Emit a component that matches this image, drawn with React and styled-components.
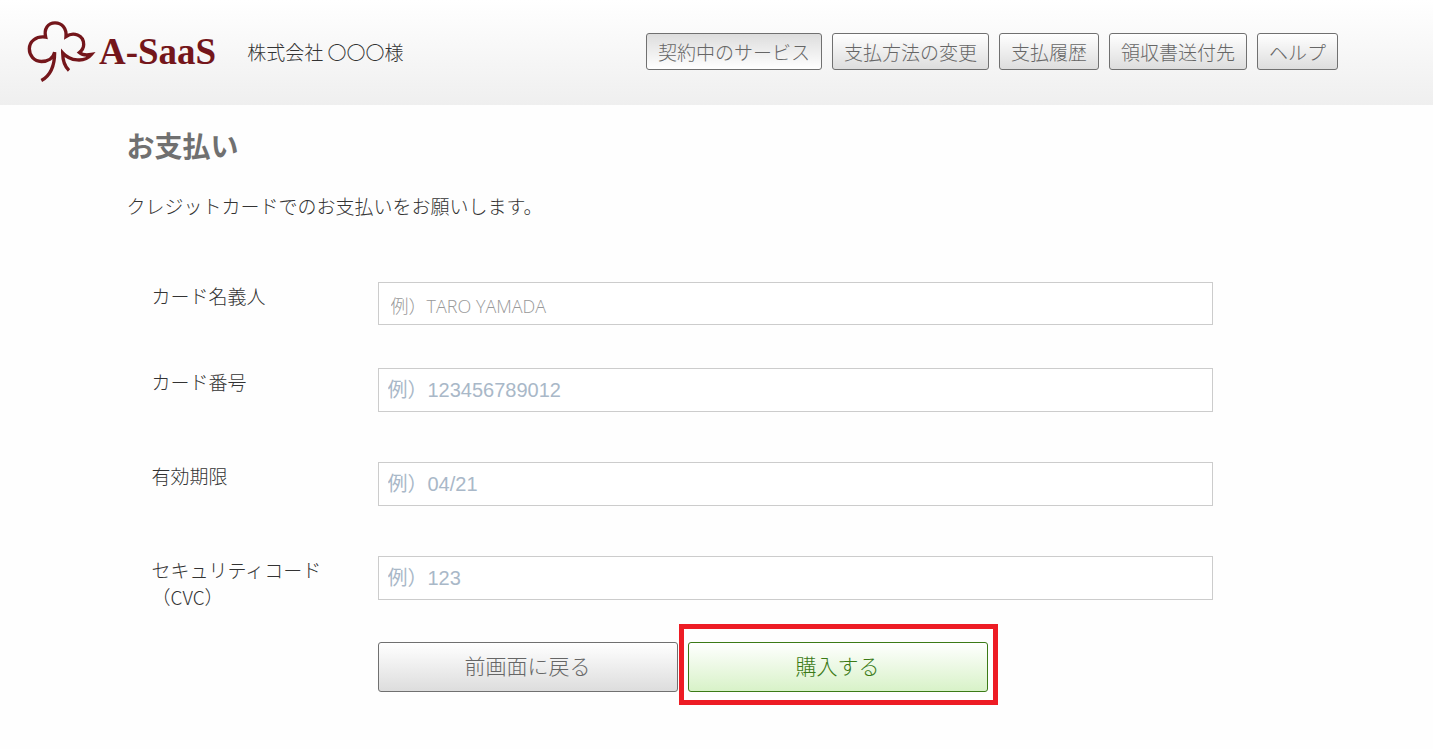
import { useState } from "react";
import styled, { createGlobalStyle, css } from "styled-components";

const menus = [
  "契約中のサービス",
  "支払方法の変更",
  "支払履歴",
  "領収書送付先",
  "ヘルプ",
];

const fields = [
  { id: "cardName", label: "カード名義人", placeholder: "例）TARO YAMADA", thin: true },
  { id: "cardNumber", label: "カード番号", placeholder: "例）123456789012" },
  { id: "cardExpiry", label: "有効期限", placeholder: "例）04/21" },
  { id: "cardCvc", label: "セキュリティコード", note: "（CVC）", placeholder: "例）123" },
];

function App() {
  const [menu, setMenu] = useState(menus[0]);
  const [card, setCard] = useState({
    cardName: "",
    cardNumber: "",
    cardExpiry: "",
    cardCvc: "",
  });

  const onChangeHandler = (e) => {
    setCard({ ...card, [e.target.id]: e.target.value });
  };

  const onSubmitHandler = (e) => {
    e.preventDefault();
  };

  return (
    <>
      <GlobalStyle />
      <Header>
        <Logo href="#">
          <CottonIcon viewBox="24 24 198 188" aria-hidden="true">
            <path d="M64 205 C92 190 104 160 104 120 C100 138 84 148 64 148 C42 147 28 130 28 110 C28 88 48 71 77 75 C71 50 84 32 105 32 C127 32 140 50 138 73 C160 58 191 68 191 97 C191 107 186 115 178 121 C188 130 200 130 214 127 C194 152 150 147 128 122 C128 147 133 162 147 175" />
          </CottonIcon>
          <LogoText>A-SaaS</LogoText>
        </Logo>
        <Company>株式会社 〇〇〇様</Company>
        <Nav>
          {menus.map((name) => (
            <MenuBtn
              key={name}
              type="button"
              $active={name === menu}
              onClick={() => setMenu(name)}
            >
              {name}
            </MenuBtn>
          ))}
        </Nav>
      </Header>
      <Main>
        <Title>お支払い</Title>
        <Lead>クレジットカードでのお支払いをお願いします。</Lead>
        <Form onSubmit={onSubmitHandler}>
          {fields.map((field) => (
            <Row key={field.id} $thin={field.thin}>
              <Label htmlFor={field.id}>
                {field.label}
                {field.note && <Note>{field.note}</Note>}
              </Label>
              <Input
                type="text"
                id={field.id}
                placeholder={field.placeholder}
                value={card[field.id]}
                onChange={onChangeHandler}
                $thin={field.thin}
              />
            </Row>
          ))}
          <Buttons>
            <FormBtn type="button">前画面に戻る</FormBtn>
            <Highlight>
              <FormBtn type="submit" $primary>
                購入する
              </FormBtn>
            </Highlight>
          </Buttons>
        </Form>
      </Main>
    </>
  );
}

const GlobalStyle = createGlobalStyle`
  * {
    box-sizing: border-box;
  }

  body {
    margin: 0;
    background-color: #fefefe;
    color: #333333;
    font-family: "Noto Sans CJK JP", sans-serif;
    font-size: 19px;
    font-weight: 300;
    line-height: 27px;
  }

  button,
  input {
    font-family: inherit;
    font-weight: inherit;
  }
`;

const Header = styled.header`
  min-height: 105px;
  padding: 0 95px 2px 28px;
  background: linear-gradient(#ffffff, #efefef);

  display: flex;
  align-items: center;
`;

const Logo = styled.a`
  color: #74161b;
  text-decoration: none;

  display: flex;
  align-items: center;
  gap: 5px;
`;

const CottonIcon = styled.svg`
  width: 66px;
  height: 63px;
  fill: none;
  stroke: currentColor;
  stroke-width: 10;
  stroke-linejoin: miter;
  overflow: visible;
`;

const LogoText = styled.span`
  font-family: "Liberation Serif", serif;
  font-size: 37px;
  font-weight: bold;
  line-height: 40px;
`;

const Company = styled.p`
  margin: 0 0 0 31px;
  white-space: nowrap;
`;

const Nav = styled.nav`
  margin-left: auto;

  display: flex;
  gap: 10px;
`;

const MenuBtn = styled.button`
  height: 37px;
  padding: 0 11px;
  border: 1px solid #707070;
  border-radius: 3px;
  background: ${({ $active }) =>
    $active
      ? "linear-gradient(#dddddd, #ffffff)"
      : "linear-gradient(#ffffff, #dddddd)"};
  color: #666666;
  font-size: 19px;
  white-space: nowrap;
  cursor: pointer;
`;

const Main = styled.main`
  max-width: 1180px;
  margin: 0 auto;
  padding: 20px 0;
`;

const Title = styled.h1`
  margin: 0;
  color: #707070;
  font-size: 28px;
  font-weight: bold;
  line-height: 40px;
`;

const Lead = styled.p`
  margin: 27px 0 0;
`;

const Form = styled.form`
  margin-top: 63px;
  padding: 0 94px 0 25px;
`;

const Row = styled.div`
  margin-bottom: ${({ $thin }) => ($thin ? "43px" : "50px")};

  display: grid;
  grid-template-columns: 226px 1fr;
  align-items: start;

  &:nth-of-type(4) {
    margin-bottom: 32px;
  }
`;

const Label = styled.label`
  display: block;
`;

const Note = styled.span`
  display: block;
`;

const Input = styled.input`
  width: 100%;
  height: 44px;
  padding: 0 9px;
  border: 1px solid #cccccc;
  border-radius: 0;
  background-color: #ffffff;
  color: #404040;
  font-family: "Liberation Sans", "Noto Sans CJK JP", sans-serif;
  font-size: 20px;
  font-weight: 400;

  &::placeholder {
    color: #a9b8c8;
    opacity: 1;
  }

  ${({ $thin }) =>
    $thin &&
    css`
      height: 43px;
      padding: 4px 12px 0;
      font-family: "Open Sans", "Noto Sans CJK JP", sans-serif;
      font-size: 18px;
      font-weight: 300;

      &::placeholder {
        color: #999999;
      }
    `}
`;

const Buttons = styled.div`
  margin-left: 226px;

  display: flex;
  gap: 10px;
`;

const FormBtn = styled.button`
  width: 300px;
  height: 50px;
  padding: 0 0 4px;
  border: 1px solid #707070;
  border-radius: 3px;
  background: linear-gradient(#ffffff, #dddddd);
  color: #666666;
  font-size: 21px;
  cursor: pointer;

  ${({ $primary }) =>
    $primary &&
    css`
      border-color: #3b7a16;
      background: linear-gradient(#ffffff, #d8f2c8);
      color: #3b7a16;
    `}
`;

const Highlight = styled.div`
  position: relative;

  &::after {
    content: "";
    position: absolute;
    inset: -18px -10px -13px -9px;
    border: 5px solid #ed1c24;
    pointer-events: none;
  }
`;

export default App;
